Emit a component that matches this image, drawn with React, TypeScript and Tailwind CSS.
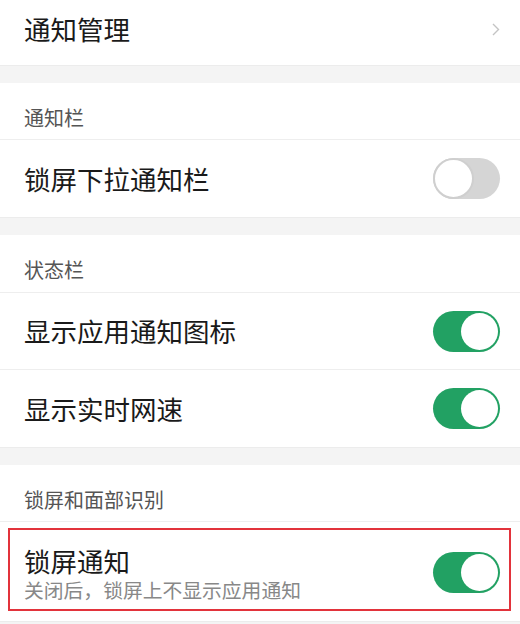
import React from "react";

const font = { fontFamily: '"Noto Sans CJK SC", "Noto Sans", sans-serif' };

function Toggle({ on }: { on: boolean }) {
  if (on) {
    return (
      <div className="w-[67px] h-[41px] rounded-full bg-[#22a163] flex items-center justify-end pr-[2px] shrink-0">
        <div className="w-[37px] h-[37px] rounded-full bg-white" />
      </div>
    );
  }
  return (
    <div className="w-[67px] h-[41px] rounded-full bg-[#d5d5d5] flex items-center shrink-0">
      <div className="w-[41px] h-[41px] rounded-full bg-white border-[2px] border-[#cfcfcf]" />
    </div>
  );
}

function Gap() {
  return <div className="h-[18px] bg-[#f4f4f4] border-t border-[#ececec]" />;
}

function Header({ text, h }: { text: string; h: string }) {
  return (
    <div className={`${h} flex items-center pt-[13px] pl-[24px] border-b border-[#eeeeee] text-[20px] leading-[24px] text-[#555555]`}>
      {text}
    </div>
  );
}

function ToggleRow({ text, on, last }: { text: string; on: boolean; last?: boolean }) {
  return (
    <div className={`h-[77px] flex items-center justify-between pl-[24px] pr-[20px] ${last ? "" : "border-b border-[#eeeeee]"}`}>
      <span className="text-[26.5px] leading-[30px] text-[#1a1a1a]">{text}</span>
      <Toggle on={on} />
    </div>
  );
}

export default function App() {
  return (
    <div className="w-[520px] h-[624px] bg-[#f4f4f4] overflow-hidden" style={font}>
      <div className="bg-white">
        <div className="h-[65px] flex items-center justify-between pl-[24px] pr-[20px] pb-[8px]">
          <span className="text-[26.5px] leading-[30px] text-[#1a1a1a]">通知管理</span>
          <svg width="8" height="13" viewBox="0 0 8 13" className="mt-[2px]">
            <path d="M1 1 L6.5 6.5 L1 12" fill="none" stroke="#c4c4c4" strokeWidth="1.4" />
          </svg>
        </div>
      </div>
      <Gap />
      <div className="bg-white">
        <Header text="通知栏" h="h-[57px]" />
        <ToggleRow text="锁屏下拉通知栏" on={false} last />
      </div>
      <Gap />
      <div className="bg-white">
        <Header text="状态栏" h="h-[58px]" />
        <ToggleRow text="显示应用通知图标" on />
        <ToggleRow text="显示实时网速" on last />
      </div>
      <Gap />
      <div className="bg-white">
        <Header text="锁屏和面部识别" h="h-[57px]" />
        <div className="relative h-[100px] flex items-center justify-between pl-[24px] pr-[20px] pt-[2px] border-b border-[#ececec]">
          <div className="flex flex-col pt-[4px]">
            <span className="text-[26.5px] leading-[29px] text-[#1a1a1a]">锁屏通知</span>
            <span className="text-[19.8px] leading-[29px] text-[#888888]">关闭后，锁屏上不显示应用通知</span>
          </div>
          <Toggle on />
          <div className="absolute left-[8px] top-[6px] w-[503px] h-[83px] border-[2px] border-[#e2333b] pointer-events-none" />
        </div>
      </div>
    </div>
  );
}
